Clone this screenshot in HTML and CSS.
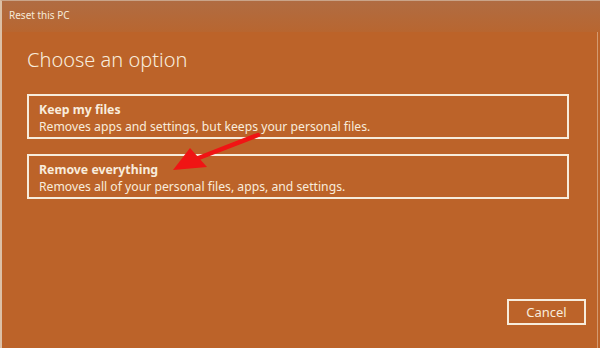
FILE: index.html
```html
<html>

<head>
  <link rel="stylesheet" href="styles.css">
</head>

<body>
  <div class="window">
    <div class="window-title">Reset this PC</div>

    <div class="window-body">
      <h1 class="heading">Choose an option</h1>

      <div class="options">
        <div class="option">
          <div class="option-title">Keep my files</div>
          <div class="option-text">Removes apps and settings, but keeps your personal files.</div>
        </div>

        <div class="option">
          <div class="option-title">Remove everything</div>
          <div class="option-text">Removes all of your personal files, apps, and settings.</div>
        </div>
      </div>

      <div class="actions">
        <button class="button">Cancel</button>
      </div>
    </div>

    <!-- annotation arrow laid over the dialog -->
    <svg class="arrow" width="600" height="348" viewBox="0 0 600 348">
      <line x1="258" y1="135" x2="196" y2="159" stroke="#f01414" stroke-width="4.5" stroke-linecap="round" />
      <polygon points="173,170 190,148 207,167" fill="#f01414" />
    </svg>
  </div>
</body>

</html>
```

FILE: styles.css
```css
* {
  margin: 0;
  padding: 0;
  box-sizing: border-box;
}

body {
  font-family: "Noto Sans", "Open Sans", sans-serif;
  background: #bc6329;
  overflow: hidden;
}

.window {
  position: relative;
  width: 600px;
  height: 348px;
  display: flex;
  flex-direction: column;
  background: #bc6329;
  border-left: 2px solid #dcc0a6;
  border-top: 1px solid #c9a489;
}

.window-title {
  height: 31px;
  padding: 7px 0 0 7px;
  font-size: 10px;
  color: #f6ead8;
  background: linear-gradient(#b06c42, #b86630);
}

.window-body {
  flex: 1;
  display: flex;
  flex-direction: column;
  padding: 14px 28px 23px 25px;
  border-right: 1px solid #d39a70;
  margin-right: 2px;
}

.heading {
  font-size: 20px;
  font-weight: 300;
  color: #f8ecdc;
  line-height: 28px;
  margin-bottom: 20px;
}

.options {
  display: flex;
  flex-direction: column;
  gap: 15px;
}

.option {
  height: 45px;
  padding: 5px 10px 0;
  border: 2px solid #f7ecdc;
  color: #f8ecdc;
}

.option-title {
  font-size: 12.3px;
  font-weight: 700;
  line-height: 17px;
}

.option-text {
  font-size: 12.2px;
  line-height: 17px;
}

.actions {
  margin-top: auto;
  display: flex;
  justify-content: flex-end;
}

.button {
  width: 79px;
  height: 26px;
  margin-right: -17px;
  background: transparent;
  border: 2px solid #f7ecdc;
  color: #f8ecdc;
  font-family: inherit;
  font-size: 13px;
}

.arrow {
  position: absolute;
  left: -2px;
  top: -1px;
  pointer-events: none;
}
```
